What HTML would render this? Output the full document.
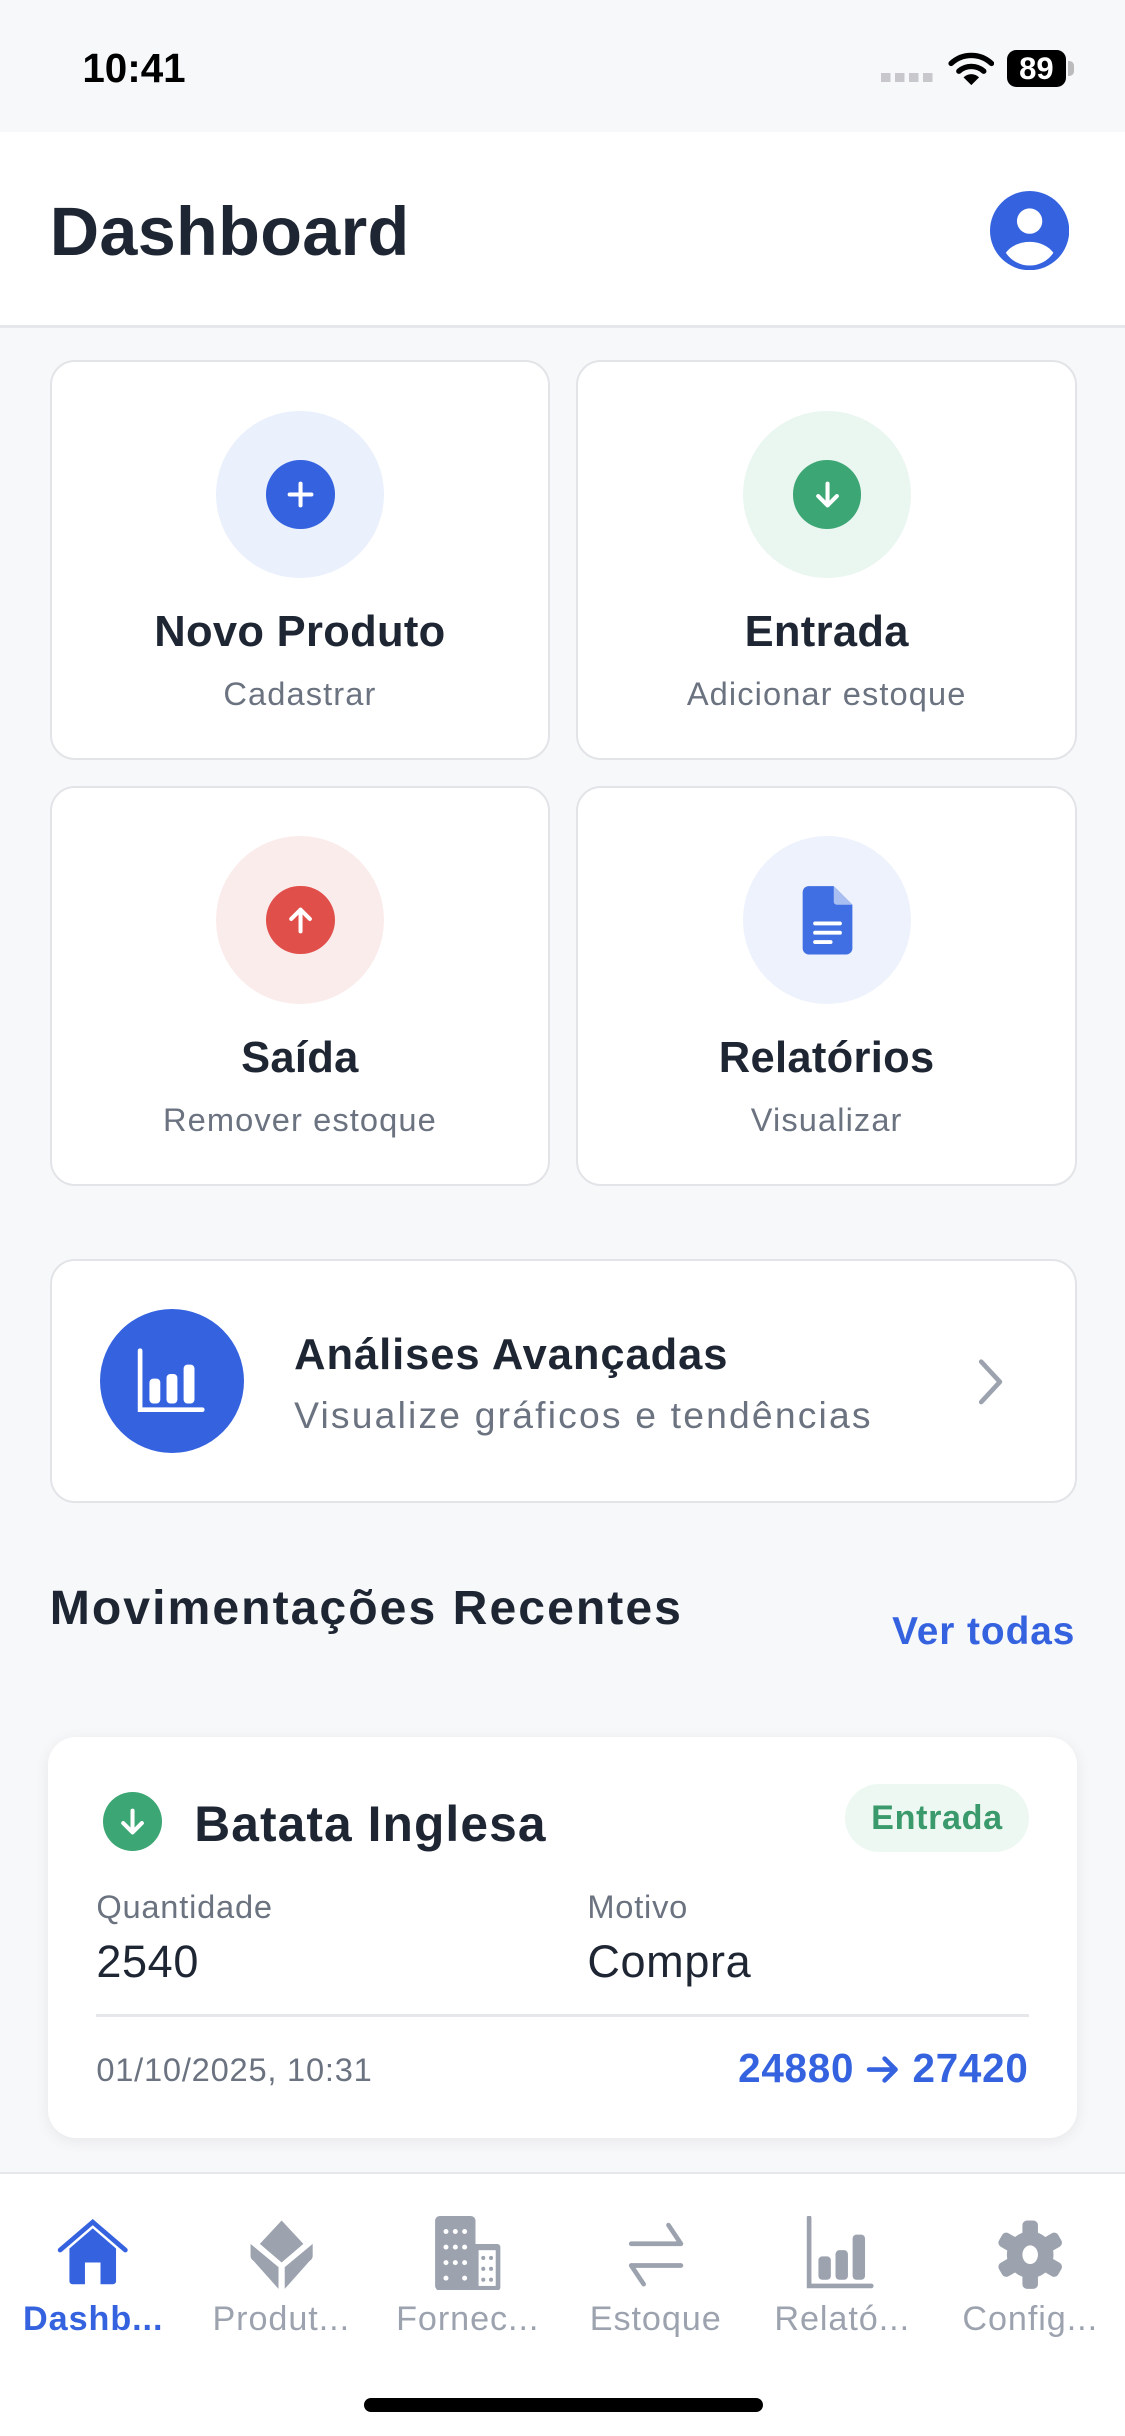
<!DOCTYPE html>
<html><head><meta charset="utf-8"><style>
html{zoom:1.55387}
*{margin:0;padding:0;box-sizing:border-box}
body{width:724px;height:1568px;background:#f7f8fa;font-family:"Liberation Sans",sans-serif;position:relative;overflow:hidden;color:#1f2633}
.a{position:absolute}
.card{position:absolute;background:#fff;border:1.5px solid #e2e4e8;border-radius:16px}
.ic{position:absolute;width:108px;height:108px;border-radius:50%;left:106px;top:31px}
.ic .in{position:absolute;left:32px;top:32px;width:44px;height:44px;border-radius:50%}
.t{position:absolute;width:100%;text-align:center;top:158px;font-size:28px;font-weight:600;color:#1f2633;letter-spacing:0.2px}
.s{position:absolute;width:100%;text-align:center;top:201px;font-size:21px;color:#6b7280;letter-spacing:0.7px}
.tab{position:absolute;top:1420px;width:120px;text-align:center}
.tab span{position:absolute;top:60px;left:0;width:100%;font-size:22px;color:#9ca3af;text-align:center;letter-spacing:0.6px}
</style></head><body>
<div class="a" style="left:53px;top:29px;font-size:26px;font-weight:600;color:#000">10:41</div>
<div class="a" style="left:567px;top:47px;width:34px;height:6px;background:repeating-linear-gradient(90deg,#c7c7cc 0 6px,transparent 6px 9px)"></div>
<svg class="a" style="left:610px;top:33px" width="30" height="24" viewBox="0 0 30 24"><path d="M2 8a19 19 0 0 1 26 0M7 13a12 12 0 0 1 16 0" stroke="#000" stroke-width="3.5" fill="none" stroke-linecap="round"/><path d="M15 22l-5-5a7 7 0 0 1 10 0z" fill="#000"/></svg>
<div class="a" style="left:648px;top:32px;width:38px;height:24px;background:#000;border-radius:6px;color:#fff;font-size:20px;font-weight:700;text-align:center;line-height:24px">89</div>
<div class="a" style="left:687px;top:39px;width:4px;height:10px;background:#bbb;border-radius:0 3px 3px 0"></div>
<div class="a" style="left:0;top:85px;width:724px;height:126px;background:#fff;border-bottom:2px solid #e5e7eb"></div>
<div class="a" style="left:32px;top:124px;font-size:44px;font-weight:700;color:#1f2633;letter-spacing:0.2px">Dashboard</div>
<svg class="a" style="left:637px;top:123px" width="51" height="51" viewBox="0 0 50 50"><circle cx="25" cy="25" r="25" fill="#3563e0"/><circle cx="25" cy="19" r="8" fill="#fff"/><path d="M10 39a17 13 0 0 1 30 0a18 18 0 0 1-30 0z" fill="#fff"/></svg>

<div class="card" style="left:32px;top:232px;width:322px;height:257px"><div class="ic" style="background:#eaf0fc;left:106px"><div class="in" style="background:#3563e0"></div><svg class="a" style="left:44px;top:44px" width="20" height="20"><path d="M10 3v14M3 10h14" stroke="#fff" stroke-width="2.6" stroke-linecap="round"/></svg></div><div class="t">Novo Produto</div><div class="s">Cadastrar</div></div>
<div class="card" style="left:371px;top:232px;width:322px;height:257px"><div class="ic" style="background:#eaf6f0"><div class="in" style="background:#3da675"></div><svg class="a" style="left:44px;top:44px" width="20" height="20"><path d="M10 3v14M4 11l6 6 6-6" stroke="#fff" stroke-width="2.6" fill="none" stroke-linecap="round" stroke-linejoin="round"/></svg></div><div class="t">Entrada</div><div class="s">Adicionar estoque</div></div>
<div class="card" style="left:32px;top:506px;width:322px;height:257px"><div class="ic" style="background:#fbecec"><div class="in" style="background:#e04f4a"></div><svg class="a" style="left:44px;top:44px" width="20" height="20"><path d="M10 17V3M4 9l6-6 6 6" stroke="#fff" stroke-width="2.6" fill="none" stroke-linecap="round" stroke-linejoin="round"/></svg></div><div class="t">Saída</div><div class="s">Remover estoque</div></div>
<div class="card" style="left:371px;top:506px;width:322px;height:257px"><div class="ic" style="background:#edf2fc"><svg class="a" style="left:35px;top:30px" width="38" height="48" viewBox="0 0 38 48"><path d="M3 6a4 4 0 0 1 4-4h16l12 12v28a4 4 0 0 1-4 4H7a4 4 0 0 1-4-4z" fill="#3f6fe3"/><path d="M23 2v10a2 2 0 0 0 2 2h10" fill="#a9bff2"/><path d="M11 26h16M11 32h16M11 38h10" stroke="#fff" stroke-width="2.5" stroke-linecap="round"/></svg></div><div class="t">Relatórios</div><div class="s">Visualizar</div></div>

<div class="card" style="left:32px;top:810px;width:661px;height:157px">
<div class="a" style="left:31px;top:31px;width:93px;height:93px;border-radius:50%;background:#3563e0"></div>
<svg class="a" style="left:55px;top:55px" width="46" height="46" viewBox="0 0 46 46"><path d="M2 3v38h40" stroke="#fff" stroke-width="3" fill="none" stroke-linecap="round"/><rect x="8" y="21" width="7" height="16" rx="2.5" fill="#fff"/><rect x="19" y="18" width="7" height="19" rx="2.5" fill="#fff"/><rect x="30" y="12" width="7" height="25" rx="2.5" fill="#fff"/></svg>
<div class="a" style="left:156px;top:45px;font-size:28px;font-weight:600;letter-spacing:0.6px">Análises Avançadas</div>
<div class="a" style="left:156px;top:86px;font-size:24px;color:#6b7280;letter-spacing:1.4px">Visualize gráficos e tendências</div>
<svg class="a" style="left:594px;top:62px" width="20" height="32"><path d="M4 3l12 13-12 13" stroke="#9ca3af" stroke-width="3" fill="none" stroke-linecap="round" stroke-linejoin="round"/></svg>
</div>

<div class="a" style="left:32px;top:1017px;font-size:31px;font-weight:600;letter-spacing:1.3px">Movimentações Recentes</div>
<div class="a" style="right:32px;top:1036px;font-size:25px;font-weight:600;color:#3563e0;letter-spacing:0.6px">Ver todas</div>

<div class="a" style="left:31px;top:1118px;width:662px;height:258px;background:#fff;border-radius:18px;box-shadow:0 2px 10px rgba(0,0,0,.07)">
<div class="a" style="left:35px;top:35px;width:38px;height:38px;border-radius:50%;background:#3da675"></div>
<svg class="a" style="left:44px;top:44px" width="20" height="20"><path d="M10 3v14M4 11l6 6 6-6" stroke="#fff" stroke-width="2.6" fill="none" stroke-linecap="round" stroke-linejoin="round"/></svg>
<div class="a" style="left:94px;top:37px;font-size:32px;font-weight:600;letter-spacing:0.7px">Batata Inglesa</div>
<div class="a" style="left:513px;top:30px;width:118px;height:44px;border-radius:22px;background:#eef8f2;color:#3b9a6c;font-size:22px;font-weight:600;text-align:center;line-height:44px;letter-spacing:0.4px">Entrada</div>
<div class="a" style="left:31px;top:97px;font-size:21px;color:#6b7280;letter-spacing:0.5px">Quantidade</div>
<div class="a" style="left:31px;top:128px;font-size:29px;letter-spacing:0.4px">2540</div>
<div class="a" style="left:347px;top:97px;font-size:21px;color:#6b7280;letter-spacing:0.5px">Motivo</div>
<div class="a" style="left:347px;top:128px;font-size:29px;letter-spacing:0.4px">Compra</div>
<div class="a" style="left:31px;top:178px;width:600px;height:2px;background:#e5e7eb"></div>
<div class="a" style="left:31px;top:202px;font-size:21px;color:#6b7280;letter-spacing:0.5px">01/10/2025, 10:31</div>
<div class="a" style="right:31px;top:198px;font-size:26px;font-weight:700;color:#3563e0;letter-spacing:0.5px">24880 <svg width="22" height="20" viewBox="0 0 22 20" style="vertical-align:-2px"><path d="M2 10h17M12 3l7 7-7 7" stroke="#3563e0" stroke-width="3" fill="none" stroke-linecap="round" stroke-linejoin="round"/></svg> 27420</div>
</div>

<div class="a" style="left:0;top:1398px;width:724px;height:170px;background:#fff;border-top:1.5px solid #e5e7eb"></div>
<div class="tab" style="left:0"><svg class="a" style="left:37px;top:8px" width="46" height="46" viewBox="0 0 46 46"><path d="M2 20L23 2l21 18" stroke="#3563e0" stroke-width="3" fill="none" stroke-linecap="round"/><path d="M8 19L23 6l15 13v21a2 2 0 0 1-2 2H28V28h-10v14H10a2 2 0 0 1-2-2z" fill="#3563e0"/></svg><span style="color:#3563e0;font-weight:600">Dashb...</span></div>
<div class="tab" style="left:121px"><svg class="a" style="left:39px;top:8px" width="42" height="46" viewBox="0 0 42 46"><path d="M21 1l14 15-14 12L7 16z" fill="#9ca3af"/><path d="M1 16l18 15v14L3 27a4 4 0 0 1-2-3z" fill="#9ca3af"/><path d="M41 16L23 31v14l16-18a4 4 0 0 0 2-3z" fill="#9ca3af"/></svg><span>Produt...</span></div>
<div class="tab" style="left:241px"><svg class="a" style="left:37px;top:6px" width="46" height="48" viewBox="0 0 46 48"><rect x="2" y="0" width="26" height="48" rx="3" fill="#9ca3af"/><rect x="26" y="18" width="18" height="30" rx="2" fill="#9ca3af"/><g fill="#fff"><circle cx="9" cy="10" r="1.6"/><circle cx="15" cy="10" r="1.6"/><circle cx="21" cy="10" r="1.6"/><circle cx="9" cy="20" r="1.6"/><circle cx="15" cy="20" r="1.6"/><circle cx="21" cy="20" r="1.6"/><circle cx="9" cy="30" r="1.6"/><circle cx="15" cy="30" r="1.6"/><circle cx="21" cy="30" r="1.6"/><circle cx="9" cy="40" r="1.6"/><circle cx="21" cy="40" r="1.6"/><rect x="30" y="22" width="11" height="23" fill="#fff"/></g><g fill="#9ca3af"><circle cx="33" cy="27" r="1.3"/><circle cx="38" cy="27" r="1.3"/><circle cx="33" cy="34" r="1.3"/><circle cx="38" cy="34" r="1.3"/><circle cx="33" cy="41" r="1.3"/><circle cx="38" cy="41" r="1.3"/></g></svg><span>Fornec...</span></div>
<div class="tab" style="left:362px"><svg class="a" style="left:40px;top:10px" width="40" height="42" viewBox="0 0 40 42"><path d="M4 14h32M28 2l8 12M4 28h32M12 40L4 28" stroke="#9ca3af" stroke-width="3" fill="none" stroke-linecap="round"/></svg><span>Estoque</span></div>
<div class="tab" style="left:482px"><svg class="a" style="left:37px;top:6px" width="46" height="48" viewBox="0 0 46 48"><path d="M2 1v44h40" stroke="#9ca3af" stroke-width="3" fill="none" stroke-linecap="round"/><rect x="8" y="26" width="8" height="15" rx="2.5" fill="#9ca3af"/><rect x="19" y="22" width="8" height="19" rx="2.5" fill="#9ca3af"/><rect x="30" y="12" width="8" height="29" rx="2.5" fill="#9ca3af"/></svg><span>Relató...</span></div>
<div class="tab" style="left:603px"><svg class="a" style="left:38px;top:8px" width="44" height="46" viewBox="-22 -23 44 46"><g fill="#9ca3af"><circle r="15"/><rect x="-5" y="-22" width="10" height="44" rx="3"/><rect x="-5" y="-22" width="10" height="44" rx="3" transform="rotate(60)"/><rect x="-5" y="-22" width="10" height="44" rx="3" transform="rotate(-60)"/></g><ellipse rx="5" ry="6" fill="#fff"/></svg><span>Config...</span></div>
<div class="a" style="left:234px;top:1543px;width:257px;height:9px;border-radius:5px;background:#000"></div>
</body></html>
